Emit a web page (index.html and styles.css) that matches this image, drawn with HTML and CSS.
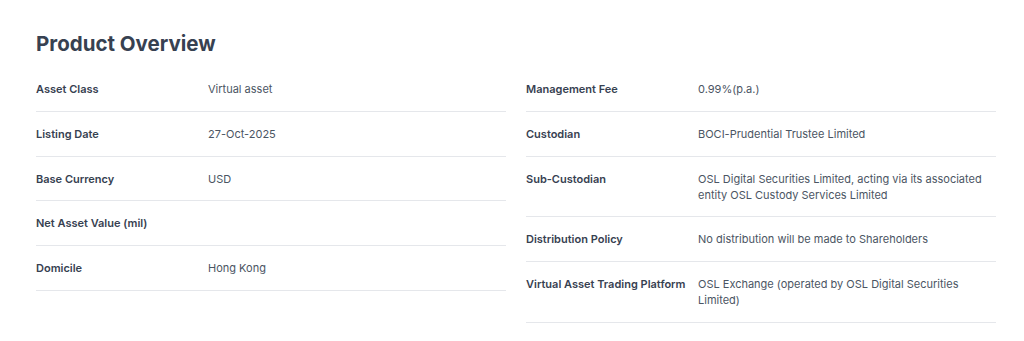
FILE: index.html
```html
<!DOCTYPE html>
<html lang="en">
<head>
    <meta charset="UTF-8">
    <meta name="viewport" content="width=device-width, initial-scale=1.0">
    <title>Product Overview</title>
    <link rel="stylesheet" href="styles.css">
</head>
<body>
    <section id="overview">
        <h2>Product Overview</h2>
        <div class="overview-cols">
            <div class="overview-list">
                <div class="ov-row"><div class="ov-label">Asset Class</div><div class="ov-value">Virtual asset</div></div>
                <div class="ov-row"><div class="ov-label">Listing Date</div><div class="ov-value">27-Oct-2025</div></div>
                <div class="ov-row"><div class="ov-label">Base Currency</div><div class="ov-value">USD</div></div>
                <div class="ov-row"><div class="ov-label">Net Asset Value (mil)</div><div class="ov-value"></div></div>
                <div class="ov-row"><div class="ov-label">Domicile</div><div class="ov-value">Hong Kong</div></div>
            </div>
            <div class="overview-list">
                <div class="ov-row"><div class="ov-label">Management Fee</div><div class="ov-value">0.99%(p.a.)</div></div>
                <div class="ov-row"><div class="ov-label">Custodian</div><div class="ov-value">BOCI-Prudential Trustee Limited</div></div>
                <div class="ov-row"><div class="ov-label">Sub-Custodian</div><div class="ov-value">OSL Digital Securities Limited, acting via its associated entity OSL Custody Services Limited</div></div>
                <div class="ov-row"><div class="ov-label">Distribution Policy</div><div class="ov-value">No distribution will be made to Shareholders</div></div>
                <div class="ov-row"><div class="ov-label">Virtual Asset Trading Platform</div><div class="ov-value">OSL Exchange (operated by OSL Digital Securities Limited)</div></div>
            </div>
        </div>
    </section>
</body>
</html>
```

FILE: styles.css
```css
body {
    margin: 0;
    padding: 0;
    background: #ffffff;
    font-family: Inter, "Noto Sans", sans-serif;
}

/* Overview Section */
#overview {
    padding: 30px 28px 0 36px;
}

#overview h2 {
    margin: 0 0 9px;
    font-size: 20.5px;
    line-height: 28px;
    font-weight: 700;
    color: #374151;
}

.overview-cols {
    display: grid;
    grid-template-columns: 470px 470px;
    gap: 20px;
}

/* Rows */
.ov-row {
    display: grid;
    grid-template-columns: 172px 1fr;
    padding: 14px 0 13.75px;
    border-bottom: 1px solid #e5e7eb;
    font-size: 11px;
    line-height: 16px;
}

.ov-label {
    font-weight: 600;
    color: #374151;
}

.ov-value {
    color: #4b5563;
    padding-right: 10px;
}
```
